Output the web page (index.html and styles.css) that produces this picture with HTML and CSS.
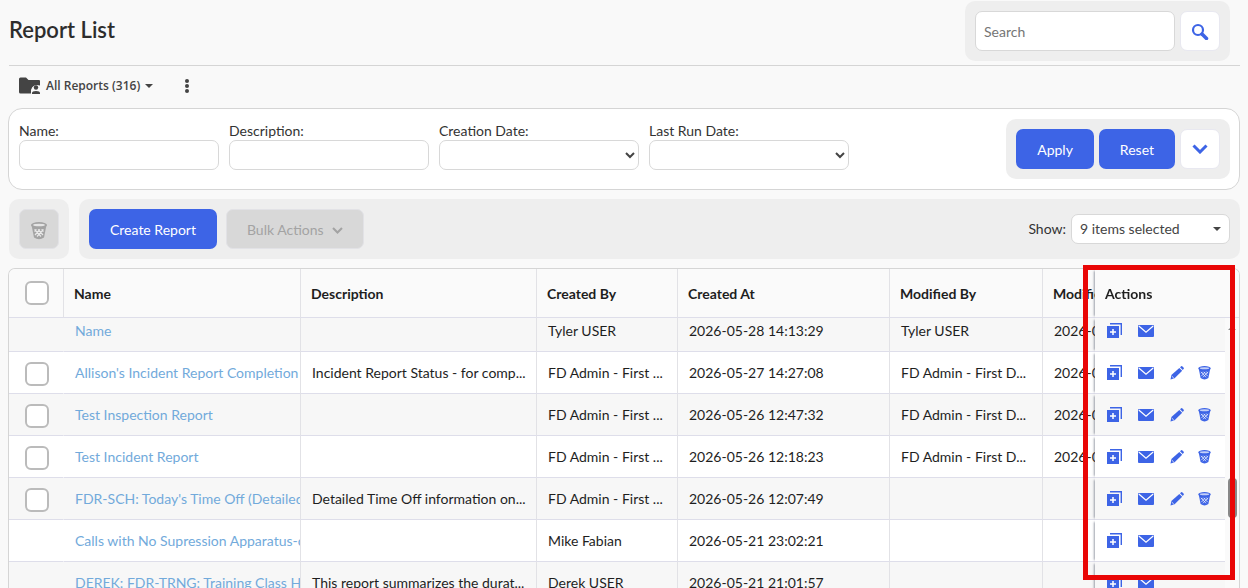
FILE: index.html
```html
<!DOCTYPE html>
<html lang="en">
<head>
    <meta charset="UTF-8">
    <meta name="viewport" content="width=device-width, initial-scale=1.0">
    <title>Report List</title>
    <link rel="stylesheet" href="styles.css">
</head>
<body>
    <svg class="sprite" aria-hidden="true">
        <symbol id="i-copy" viewBox="0 0 15 15">
            <path d="M3 .7h11.300V12" fill="none" stroke="currentColor" stroke-width="1.4"/>
            <path d="M0 3h12v12H0z" fill="currentColor"/>
            <path d="M6 6v6M3 9h6" stroke="#fff" stroke-width="1.5"/>
        </symbol>
        <symbol id="i-mail" viewBox="0 0 16 12">
            <rect width="16" height="12" rx="1" fill="currentColor"/>
            <path d="M.8 1L8 7.300L15.200 1" fill="none" stroke="#fff" stroke-width="1.2"/>
        </symbol>
        <symbol id="i-edit" viewBox="0 0 14 14">
            <path d="M1.400 9L9.300 1.900l2.900 2.900L4.600 12.200L.5 13.500z" fill="currentColor"/>
            <path d="M10 1.300L11.200.2q.5-.4 1 0l1.500 1.500q.5.500 0 1L12.800 3.900z" fill="currentColor"/>
            <path d="M1.800 10.200l2 1.900" stroke="#fff" stroke-width=".8"/>
        </symbol>
        <symbol id="i-trash" viewBox="0 0 16 18">
            <path d="M.5 3L3 15.500q5 3.600 10 0L15.500 3z" fill="currentColor"/>
            <ellipse cx="8" cy="3" rx="8" ry="3" fill="currentColor"/>
            <ellipse class="hole" cx="8" cy="3" rx="6" ry="1.300"/>
            <path class="mesh" d="M3.500 7.500l6.500 7M7 7.500l5 5.500M10.500 7.500l2 2M12.500 7.500l-6.500 7M9 7.500l-5 5.500M5.500 7.500l-2 2" fill="none" stroke-width="1.200"/>
        </symbol>
        <symbol id="i-chevron" viewBox="0 0 16 10">
            <path d="M1.500 1.500L8 8l6.500-6.500" fill="none" stroke="currentColor" stroke-width="3"/>
        </symbol>
        <symbol id="i-caret" viewBox="0 0 8 4">
            <path d="M0 0h8L4 4z" fill="currentColor"/>
        </symbol>
    </svg>

    <header class="page-header">
        <h1>Report List</h1>
        <form class="group search">
            <input type="text" placeholder="Search" aria-label="Search">
            <button type="button" class="btn-icon" aria-label="Search">
                <svg width="18" height="18" viewBox="0 0 18 18">
                    <circle cx="7" cy="8" r="5" fill="none" stroke="currentColor" stroke-width="2.2"/>
                    <path d="M11 12l4.500 4.500" stroke="currentColor" stroke-width="3.500" stroke-linecap="round"/>
                </svg>
            </button>
        </form>
    </header>

    <nav class="folder-bar">
        <button type="button" class="folder">
            <svg width="22" height="18" viewBox="0 0 22 18">
                <path d="M0 2q0-1.500 1.500-1.500h5.500L9.500 3H20q1 0 1 1v4.500a6.500 6.500 0 0 0-9 4.500v3.500H1.500Q0 16.500 0 15z" fill="currentColor"/>
                <circle cx="17" cy="10.500" r="2.200" fill="currentColor"/>
                <path d="M13 17v-1q0-2 4-2t4 2v1z" fill="currentColor"/>
            </svg>
            <span>All Reports (316)</span>
            <svg class="caret"><use href="#i-caret"/></svg>
        </button>
        <button type="button" class="kebab" aria-label="More">
            <svg width="4" height="14" viewBox="0 0 4 14">
                <circle cx="2" cy="2" r="2"/><circle cx="2" cy="7" r="2"/><circle cx="2" cy="12" r="2"/>
            </svg>
        </button>
    </nav>

    <form class="filters">
        <div class="field">
            <label for="name">Name:</label>
            <input type="text" id="name">
        </div>
        <div class="field">
            <label for="description">Description:</label>
            <input type="text" id="description">
        </div>
        <div class="field">
            <label for="created">Creation Date:</label>
            <select id="created"><option></option></select>
        </div>
        <div class="field">
            <label for="last-run">Last Run Date:</label>
            <select id="last-run"><option></option></select>
        </div>
        <div class="group filter-actions">
            <button type="button" class="btn">Apply</button>
            <button type="button" class="btn">Reset</button>
            <button type="button" class="btn-icon" aria-label="More filters"><svg class="chevron"><use href="#i-chevron"/></svg></button>
        </div>
    </form>

    <div class="toolbar">
        <div class="group">
            <button type="button" class="btn-icon off" disabled aria-label="Delete"><svg class="trash"><use href="#i-trash"/></svg></button>
        </div>
        <div class="group toolbar-main">
            <button type="button" class="btn">Create Report</button>
            <button type="button" class="btn off" disabled>Bulk Actions <svg class="chevron small"><use href="#i-chevron"/></svg></button>
            <label class="show-label" for="show">Show:</label>
            <span class="show-select">
                <select id="show"><option>9 items selected</option></select>
                <svg class="caret"><use href="#i-caret"/></svg>
            </span>
        </div>
    </div>

    <main class="list">
        <div class="list-view">
            <table>
                <colgroup>
                    <col class="c-check"><col class="c-name"><col class="c-desc"><col class="c-by"><col class="c-at"><col class="c-mod"><col class="c-at"><col class="c-actions">
                </colgroup>
                <thead>
                    <tr>
                        <th><input type="checkbox" aria-label="Select all"></th>
                        <th>Name</th>
                        <th>Description</th>
                        <th>Created By</th>
                        <th>Created At</th>
                        <th>Modified By</th>
                        <th>Modified At</th>
                        <th class="actions">Actions</th>
                    </tr>
                </thead>
                <tbody id="rows"></tbody>
            </table>
        </div>
        <div class="scrollbar">
            <svg class="caret up"><use href="#i-caret"/></svg>
            <div class="thumb"></div>
        </div>
        <div class="highlight"></div>
    </main>

    <script>
        const rows = [
            { name: "Name", desc: "", by: "Tyler USER", at: "2026-05-28 14:13:29", modBy: "Tyler USER", modAt: "2026-05-28 14:13:29", own: false },
            { name: "Allison's Incident Report Completion", desc: "Incident Report Status - for comp...", by: "FD Admin - First ...", at: "2026-05-27 14:27:08", modBy: "FD Admin - First D...", modAt: "2026-05-27 14:27:08", own: true },
            { name: "Test Inspection Report", desc: "", by: "FD Admin - First ...", at: "2026-05-26 12:47:32", modBy: "FD Admin - First D...", modAt: "2026-05-26 12:47:32", own: true },
            { name: "Test Incident Report", desc: "", by: "FD Admin - First ...", at: "2026-05-26 12:18:23", modBy: "FD Admin - First D...", modAt: "2026-05-26 12:18:23", own: true },
            { name: "FDR-SCH: Today's Time Off (Detailed)", desc: "Detailed Time Off information on...", by: "FD Admin - First ...", at: "2026-05-26 12:07:49", modBy: "", modAt: "", own: true },
            { name: "Calls with No Supression Apparatus-c", desc: "", by: "Mike Fabian", at: "2026-05-21 23:02:21", modBy: "", modAt: "", own: false },
            { name: "DEREK: FDR-TRNG: Training Class H", desc: "This report summarizes the durat...", by: "Derek USER", at: "2026-05-21 21:01:57", modBy: "", modAt: "", own: false }
        ];

        function action(icon, label) {
            return `<button type="button" class="act act-${icon}" aria-label="${label}"><svg><use href="#i-${icon}"/></svg></button>`;
        }

        document.getElementById("rows").innerHTML = rows.map(row => `
            <tr>
                <td>${row.own ? `<input type="checkbox" aria-label="Select ${row.name}">` : ""}</td>
                <td><a href="#">${row.name}</a></td>
                <td>${row.desc}</td>
                <td>${row.by}</td>
                <td>${row.at}</td>
                <td>${row.modBy}</td>
                <td>${row.modAt}</td>
                <td class="actions"><div class="acts">
                    ${action("copy", "Copy")}${action("mail", "Email")}
                    ${row.own ? action("edit", "Edit") + action("trash", "Delete") : ""}
                </div></td>
            </tr>`).join("");
    </script>
</body>
</html>
```
FILE: styles.css
```css
* {
    box-sizing: border-box;
}
body {
    display: flex;
    flex-direction: column;
    height: 100vh;
    margin: 0;
    padding: 0 8px;
    overflow: hidden;
    background: #f9f9f9;
    color: #333;
    font-family: Lato, sans-serif;
    font-size: 14px;
    line-height: 18px;
}
button, input, select {
    font: inherit;
    margin: 0;
}
button {
    padding: 0;
    border: none;
    background: none;
    cursor: pointer;
}
svg {
    display: block;
    flex: none;
}
.sprite {
    position: absolute;
    width: 0;
    height: 0;
}
.caret {
    width: 8px;
    height: 4px;
}
.caret.up {
    transform: rotate(180deg);
}
.chevron {
    width: 16px;
    height: 10px;
}
.chevron.small {
    width: 11px;
    height: 7px;
}
.trash {
    width: 16px;
    height: 18px;
}

/* shared controls */
.group {
    display: flex;
    align-items: center;
    gap: 5px;
    padding: 10px;
    border-radius: 10px;
    background: #eee;
}
.btn {
    display: flex;
    align-items: center;
    gap: 8px;
    height: 40px;
    padding: 2px 21px 0;
    border-radius: 7px;
    background: #3d64e6;
    color: #fff;
}
.btn-icon {
    display: flex;
    align-items: center;
    justify-content: center;
    width: 40px;
    height: 40px;
    border: 1px solid #e8e8f0;
    border-radius: 7px;
    background: #fff;
    color: #3d64e6;
}
.off {
    border: 1px solid #e2e2e6;
    background: #d8d8d8;
    color: #a3a3a3;
}
.btn-icon.off {
    padding-top: 3px;
}
input[type="text"], select {
    width: 200px;
    height: 30px;
    padding: 0 8px;
    border: 1px solid #d8d8d8;
    border-radius: 7px;
    background: #fff;
    color: #444;
}
.field select {
    padding: 0;
}

/* title and search */
.page-header {
    display: flex;
    align-items: center;
    justify-content: space-between;
    margin-left: 1px;
    padding: 1px 10px 4px 0;
    border-bottom: 1px solid #d5d5d5;
}
h1 {
    margin: 0;
    padding-bottom: 2px;
    color: #2d2d2d;
    font-size: 22px;
    font-weight: 600;
    line-height: 28px;
}
.search input[type="text"] {
    height: 40px;
}
.search input::placeholder {
    color: #757575;
}

.folder-bar {
    display: flex;
    align-items: center;
    gap: 32px;
    height: 42px;
    padding: 0 11px 2px;
    font-family: "Open Sans", sans-serif;
    font-size: 12px;
    font-weight: 600;
}
.folder {
    display: flex;
    align-items: center;
    gap: 5px;
    color: #444;
}
.kebab {
    fill: #444;
}

/* filters */
.filters {
    display: flex;
    align-items: center;
    gap: 10px;
    padding: 10px 9px 10px 10px;
    border: 1px solid #d5d5d5;
    border-radius: 14px;
    background: #fff;
}
.field {
    display: flex;
    flex-direction: column;
    align-self: flex-start;
    padding-top: 3px;
}
.filter-actions {
    margin-left: auto;
}

.toolbar {
    display: flex;
    gap: 10px;
    margin: 9px 0 9px 1px;
}
.toolbar-main {
    flex: 1;
}
.toolbar-main .off {
    margin-left: 4px;
    padding: 2px 20px 0;
}
.show-label {
    margin-left: auto;
}
.show-select {
    position: relative;
}
.show-select select {
    width: 159px;
    appearance: none;
}
.show-select .caret {
    position: absolute;
    top: 13px;
    right: 9px;
    color: #444;
    pointer-events: none;
}

/* report list */
.list {
    position: relative;
    flex: 1;
    min-height: 0;
}
.list-view {
    height: 100%;
    overflow: hidden;
    border: 1px solid #d5d5d5;
    border-bottom: none;
    border-radius: 7px 7px 0 0;
}
table {
    width: 1390px;
    table-layout: fixed;
    border-spacing: 0;
    color: #1e1e1e;
}
.c-check {
    width: 55px;
}
.c-name {
    width: 237px;
}
.c-desc {
    width: 236px;
}
.c-by {
    width: 141px;
}
.c-at {
    width: 212px;
}
.c-mod {
    width: 153px;
}
.c-actions {
    width: 144px;
}
th, td {
    padding: 0 0 0 11px;
    overflow: hidden;
    border-right: 1px solid #e2e2e6;
    border-bottom: 1px solid #dedeea;
    text-align: left;
    white-space: nowrap;
}
th {
    height: 49px;
    padding: 2px 0 0 10px;
    background: #fafafa;
}
td {
    height: 42px;
    background: #fff;
}
tr:nth-child(odd) td {
    background: #f7f7f7;
}
th:first-child {
    padding: 0 0 0 16px;
}
td:first-child {
    padding: 2px 0 0 16px;
    border-right-color: transparent;
}
tr:nth-child(odd) th {
    background: #fafafa;
}
/* partly under the header */
tbody tr:first-child td {
    height: 34px;
    padding-bottom: 8px;
}
input[type="checkbox"] {
    display: block;
    appearance: none;
    width: 24px;
    height: 24px;
    border: 2px solid #bbb;
    border-radius: 6px;
    background: #fff;
}
a {
    color: #72aadb;
    text-decoration: none;
}
.actions {
    position: sticky;
    right: 0;
    border-right: none;
    overflow: visible;
    box-shadow: -3px 0 2px -2px rgba(60, 70, 90, 0.5);
}
td.actions {
    padding-left: 12px;
}
.acts {
    display: flex;
    align-items: center;
}
.act {
    display: flex;
    color: #3d64e6;
}
.act-copy {
    width: 31px;
}
.act-copy svg {
    width: 15px;
    height: 15px;
}
.act-mail {
    width: 32px;
}
.act-mail svg {
    width: 16px;
    height: 12px;
}
.act-edit {
    width: 28px;
}
.act-edit svg {
    width: 14px;
    height: 14px;
}
.act-trash svg {
    width: 13px;
    height: 14px;
}
.hole {
    fill: #fff;
    opacity: 0.7;
}
.mesh {
    stroke: #fff;
    opacity: 0.75;
}

.scrollbar {
    position: absolute;
    top: 50px;
    right: 1px;
    bottom: 0;
    width: 14px;
    padding: 8px 3px;
    background: #fafafa;
    color: #888;
}
.thumb {
    width: 9px;
    height: 40px;
    margin-top: 148px;
    border-radius: 4px;
    background: #888;
}
.highlight {
    position: absolute;
    top: -3px;
    right: 5px;
    bottom: 8px;
    width: 152px;
    border: 5px solid #e90606;
    pointer-events: none;
}
```
